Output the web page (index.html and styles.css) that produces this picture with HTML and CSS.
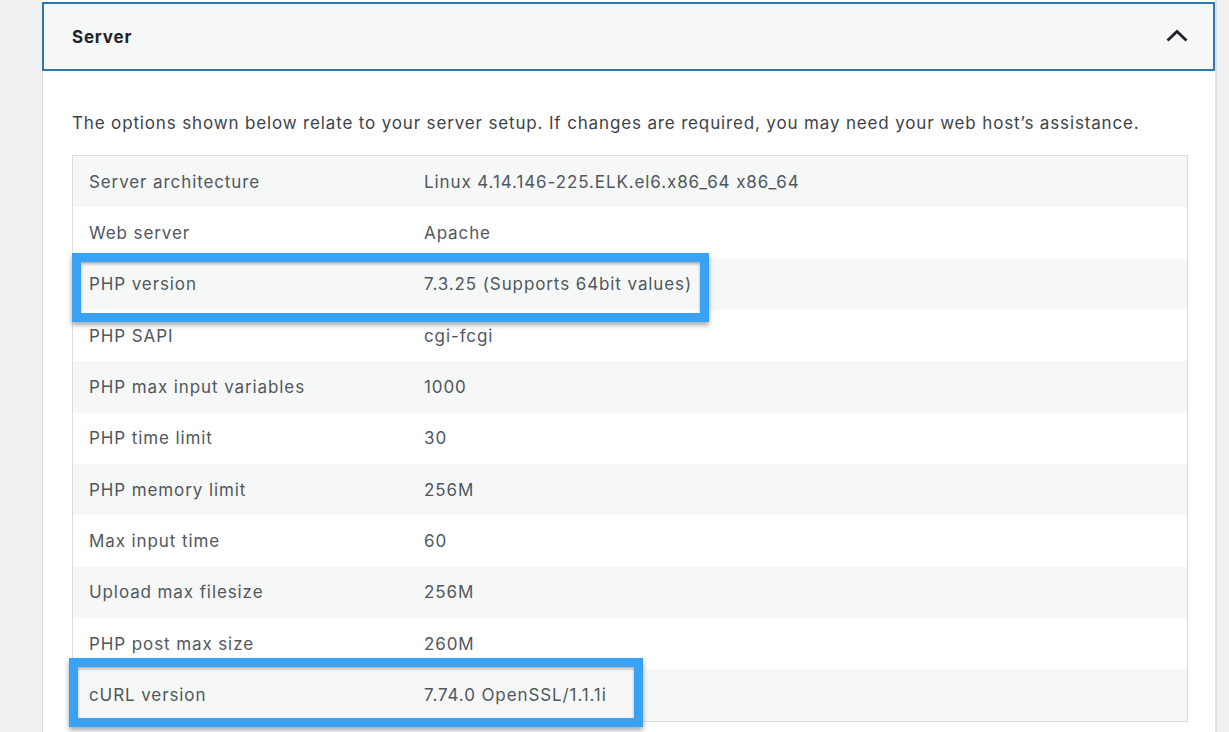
FILE: index.html
```html
<!DOCTYPE html>
<html lang="en">

<head>
    <meta charset="UTF-8">
    <title>Site Health - Server</title>
    <link rel="stylesheet" href="styles.css">
</head>

<body>
    <div class="panel">
        <!-- accordion header -->
        <div class="section-head">
            <h3>Server</h3>
            <svg class="chevron" width="24" height="15" viewBox="0 0 24 15">
                <path d="M2.5 12.5 L12 3.5 L21.5 12.5" fill="none" stroke="#1d2327" stroke-width="2.8" />
            </svg>
        </div>

        <div class="section-body">
            <p class="intro">The options shown below relate to your server setup. If changes are required, you may need your web host’s assistance.</p>

            <div class="info-table">
                <div class="row"><span>Server architecture</span><span>Linux 4.14.146-225.ELK.el6.x86_64 x86_64</span></div>
                <div class="row"><span>Web server</span><span>Apache</span></div>
                <div class="row"><span>PHP version</span><span>7.3.25 (Supports 64bit values)</span></div>
                <div class="row"><span>PHP SAPI</span><span>cgi-fcgi</span></div>
                <div class="row"><span>PHP max input variables</span><span>1000</span></div>
                <div class="row"><span>PHP time limit</span><span>30</span></div>
                <div class="row"><span>PHP memory limit</span><span>256M</span></div>
                <div class="row"><span>Max input time</span><span>60</span></div>
                <div class="row"><span>Upload max filesize</span><span>256M</span></div>
                <div class="row"><span>PHP post max size</span><span>260M</span></div>
                <div class="row"><span>cURL version</span><span>7.74.0 OpenSSL/1.1.1i</span></div>

                <!-- annotation boxes drawn over the rows -->
                <div class="mark mark-php"></div>
                <div class="mark mark-curl"></div>
            </div>
        </div>
    </div>
</body>

</html>
```

FILE: styles.css
```css
body {
    margin: 0;
    background-color: #f0f0f1;
    font-family: Inter, "Liberation Sans", sans-serif;
    font-feature-settings: "calt" 0;
    color: #50575e;
    height: 732px;
    overflow: hidden;
}

.panel {
    margin-left: 42px;
    width: 1173px;
    height: 730px;
    background-color: white;
    border-right: 2px solid #e2e2e2;
    padding-top: 2px;
    overflow: hidden;
}

.section-head {
    height: 65px;
    border: 2px solid #2c79ad;
    background-color: #f6f7f7;
    display: flex;
    align-items: center;
    justify-content: space-between;
    padding: 0 24px 0 28px;
}

.section-head h3 {
    margin: 0;
    font-size: 17px;
    font-weight: 700;
    letter-spacing: 0.8px;
    color: #1d2327;
}

.chevron {
    margin-top: -2px;
}

.section-body {
    border-left: 1px solid #dcdcde;
    padding: 0 29px;
    height: 700px;
}

.intro {
    margin: 0;
    padding-top: 39px;
    padding-bottom: 19px;
    font-size: 17px;
    line-height: 26px;
    letter-spacing: 0.85px;
    color: #3c434a;
}

.info-table {
    position: relative;
    border: 1px solid #dcdcde;
    width: 1114px;
}

.row {
    display: grid;
    grid-template-columns: 335px 1fr;
    height: 51.35px;
    align-items: center;
    font-size: 17px;
    letter-spacing: 0.9px;
}

.row:nth-child(odd) {
    background-color: #f6f7f7;
}

.row span {
    padding-left: 16px;
}

.mark {
    position: absolute;
    border: 9px solid #3aa2f4;
    box-shadow: 0 3px 5px rgba(0, 0, 0, 0.35), inset 0 2px 3px rgba(0, 0, 0, 0.3);
}

.mark-php {
    top: 97px;
    left: -1px;
    width: 619px;
    height: 51px;
}

.mark-curl {
    top: 502px;
    left: -4px;
    width: 556px;
    height: 51px;
}
```
